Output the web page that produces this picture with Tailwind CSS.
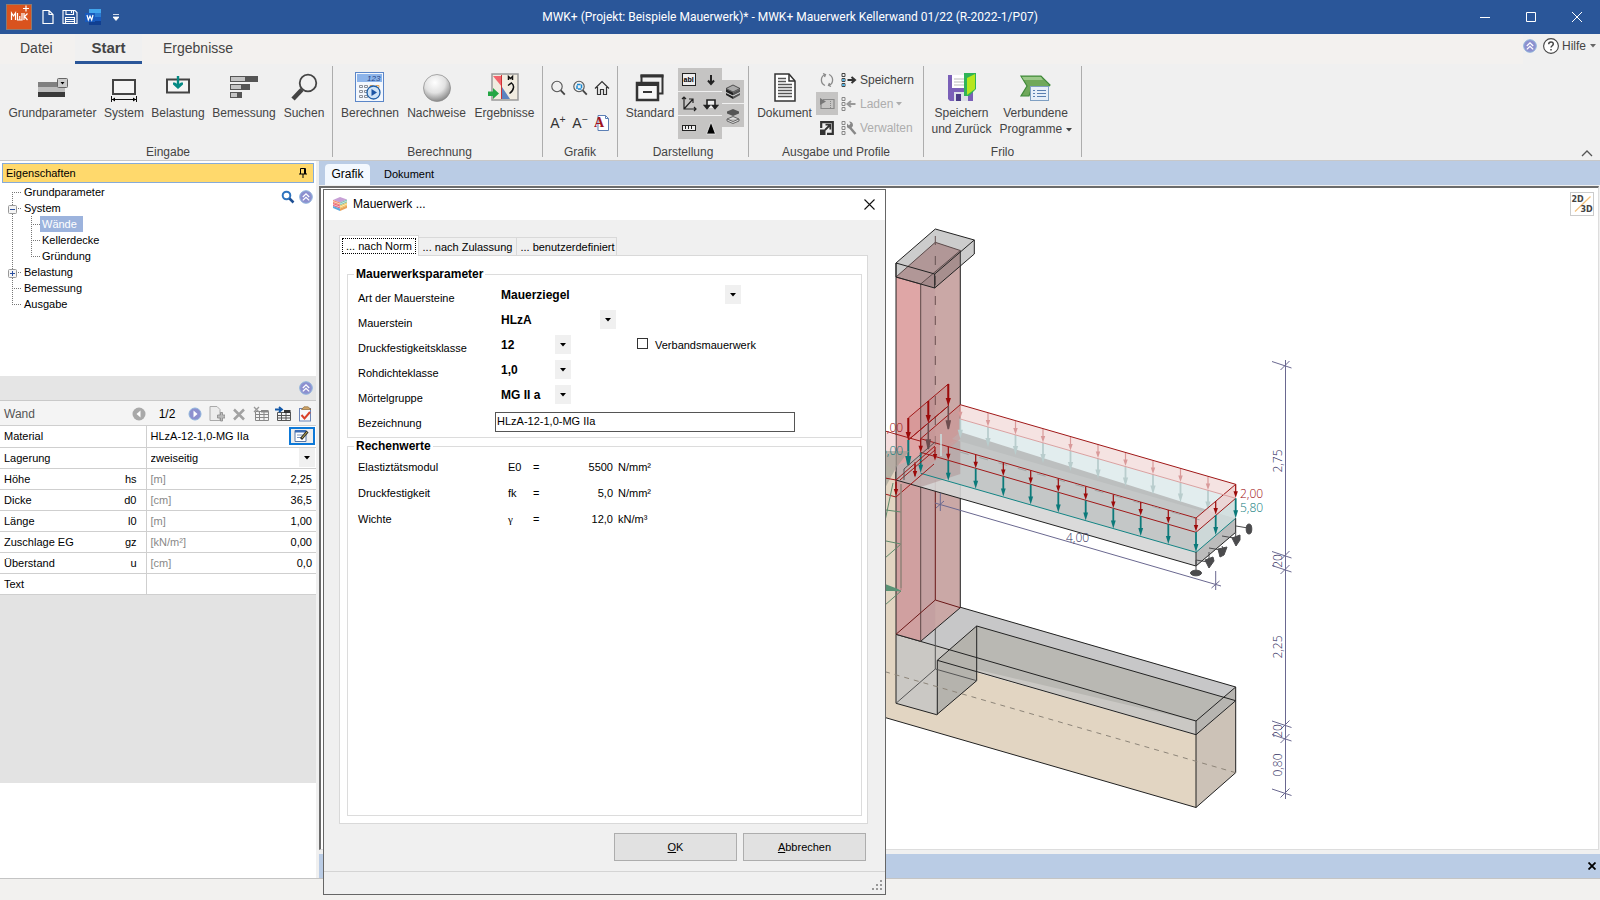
<!DOCTYPE html>
<html lang="de">
<head>
<meta charset="utf-8">
<title>MWK+ Mauerwerk Kellerwand</title>
<script src="https://cdn.jsdelivr.net/npm/@tailwindcss/browser@4"></script>
</head>
<body class="relative flex h-screen flex-col overflow-hidden bg-[#f0f0f0] font-['Liberation_Sans',sans-serif] text-[11px] leading-4 text-black">

<!-- shared symbols -->
<svg class="hidden" aria-hidden="true">
  <defs>
    <symbol id="up" viewBox="0 0 14 14"><circle cx="7" cy="7" r="6.3" fill="#8d90cf" stroke="#8fb4dc" stroke-width="1"/><path d="M3.8 7 7 3.9 10.2 7M3.8 10.4 7 7.3l3.2 3.1" fill="none" stroke="#fff" stroke-width="1.3"/></symbol>
    <symbol id="caret" viewBox="0 0 6 4"><path d="M0 0h6L3 3.5z" fill="currentColor"/></symbol>
    <symbol id="loupe" viewBox="0 0 16 16"><circle cx="7" cy="6.5" r="5.2" fill="none" stroke="#555" stroke-width="1.1"/><path d="m10.8 10.3 4 4.4" stroke="#444" stroke-width="1.8"/></symbol>
    <symbol id="profile" viewBox="0 0 16 16"><path d="M1 1.500h3v3H1zM1 6.500h3v3H1zM1 11.500h3v3H1z" fill="none" stroke="currentColor"/></symbol>
  </defs>
</svg>

<!-- title bar -->
<header class="flex h-[34px] shrink-0 items-center bg-[#2a5699] text-white">
  <div class="flex w-[130px] items-center pl-[6px]">
    <svg class="h-[26px] w-[26px]" viewBox="0 0 26 26"><rect x=".5" y=".5" width="25" height="25" fill="#d9531e" stroke="#8d7a70"/><path d="M5.500 16V9l2 3 2-3v7M11.500 9v7h4.500V9M13.800 12v4M18 9v7M21.500 9.500 18.500 12.500 21.500 16" fill="none" stroke="#fff" stroke-width="1.200"/><path d="M20 1.500v6M17 4.500h6" stroke="#fff" stroke-width="1.200"/></svg>
    <button aria-label="Neu" class="ml-[10px]"><svg class="h-4 w-3" viewBox="0 0 12 16"><path d="M1 1.500h6l4 4v9H1zM7 1.500v4h4" fill="none" stroke="#fff" stroke-width="1.200"/></svg></button>
    <button aria-label="Speichern" class="ml-2"><svg class="h-4 w-4" viewBox="0 0 16 16"><path d="M1 1.500h12l2 2v11H1zM4 1.500v4h7.500v-4M9.500 2v2M3.500 14V8.500h9V14M4 10.500h8M4 12.500h8" fill="none" stroke="#fff" stroke-width="1.100"/></svg></button>
    <button aria-label="Word" class="ml-[7px]"><svg class="h-4 w-4" viewBox="0 0 16 16"><path d="M4 0h12v4H4z" fill="#41a5ee"/><path d="M4 4h12v4H4z" fill="#2b7cd3"/><path d="M4 8h12v4H4z" fill="#185abd"/><path d="M4 12h12v4H4z" fill="#103f91"/><path d="M0 4h10v9H0z" fill="#185abd"/><path d="m2 6 1.300 5L5 7l1.700 4L8 6" fill="none" stroke="#fff" stroke-width="1.200"/></svg></button>
    <button aria-label="Anpassen" class="ml-3"><svg class="h-[7px] w-[6px]" viewBox="0 0 6 7"><path d="M0 .5h6M0 3h6L3 6.500z" fill="#fff" stroke="#fff" stroke-width=".8"/></svg></button>
  </div>
  <h1 class="flex-1 pr-3 text-center font-[Roboto,sans-serif] text-xs">MWK+ (Projekt: Beispiele Mauerwerk)* - MWK+ Mauerwerk Kellerwand 01/22 (R-2022-1/P07)</h1>
  <div class="flex w-[138px]">
    <button aria-label="Minimieren" class="flex w-[46px] justify-center"><svg class="h-[10px] w-[10px]" viewBox="0 0 10 10"><path d="M0 5.500h10" stroke="#fff"/></svg></button>
    <button aria-label="Maximieren" class="flex w-[46px] justify-center"><svg class="h-[10px] w-[10px]" viewBox="0 0 10 10"><path d="M.5.5h9v9h-9z" fill="none" stroke="#fff"/></svg></button>
    <button aria-label="Schließen" class="flex w-[46px] justify-center"><svg class="h-[10px] w-[10px]" viewBox="0 0 10 10"><path d="m0 0 10 10M10 0 0 10" stroke="#fff"/></svg></button>
  </div>
</header>

<!-- ribbon tabs -->
<nav class="flex h-[30px] shrink-0 items-stretch bg-[#f3f1ef] text-sm text-[#444]">
  <button class="w-[75px] pb-[2px] pl-[20px] text-left">Datei</button>
  <button class="w-[67px] border-b-[3px] border-[#2a5699] bg-[#f0f0f0] pt-px text-[15px] font-bold">Start</button>
  <button class="px-[21px] pb-[2px]">Ergebnisse</button>
  <div class="ml-auto flex items-center bg-[#f0f0f0] pb-[7px] text-xs">
    <button aria-label="Einklappen"><svg class="h-[14px] w-[14px]"><use href="#up"/></svg></button>
    <button class="ml-[6px] flex items-center pr-1"><svg class="mr-[3px] h-4 w-4" viewBox="0 0 16 16"><circle cx="8" cy="8" r="7.400" fill="#fff" stroke="#444" stroke-width="1.100"/><path d="M5.700 6.200c0-3 4.600-3 4.600-.2 0 1.800-2.300 1.700-2.300 3.600M8 11v1.500" fill="none" stroke="#444" stroke-width="1.500"/></svg>Hilfe<svg class="ml-1 h-1 w-[6px] text-[#666]"><use href="#caret"/></svg></button>
  </div>
</nav>

<!-- ribbon -->
<div class="flex h-[97px] shrink-0 border-b border-[#c8c8c8] bg-[#f0f0f0] pt-[2px] pb-[3px] text-xs text-[#444] [&_h2]:-mb-[3px] [&_h2]:text-center">
  <section class="flex w-[333px] flex-col border-r border-[#adadad] pl-1" aria-label="Eingabe">
    <div class="flex flex-1 items-start pt-1">
      <button class="flex w-[97px] flex-col items-center gap-px"><svg class="h-[34px] w-[34px]" viewBox="0 0 34 34"><path d="M2 12h27v5H2z" fill="#808080"/><path d="M2 17h27v5H2z" fill="#bdbdbd"/><path d="M2 22h27v5H2z" fill="#3a3a3a"/><rect x="21.500" y="8.500" width="10" height="9" rx="1" fill="#ccc" stroke="#666"/><path d="M24.500 12h4l-2 2.500z"/></svg>Grundparameter</button>
      <button class="flex w-[46px] flex-col items-center gap-px"><svg class="h-[34px] w-[34px]" viewBox="0 0 34 34"><path d="M6 10h22v14H6z" fill="#f5f5f5" stroke="#444" stroke-width="2"/><path d="M4.500 26v6M29.500 26v6M5 29.500h24" stroke="#111" fill="none"/><path d="m5 29.500 3-2v4zM29 29.500l-3-2v4z"/></svg>System</button>
      <button class="flex w-[62px] flex-col items-center gap-px"><svg class="h-[34px] w-[34px]" viewBox="0 0 34 34"><path d="M6 9.500h22v13H6z" fill="#f5f5f5" stroke="#444" stroke-width="2"/><path d="M17 6v9" stroke="#058a84" stroke-width="2.400"/><path d="M12 12.500h2l3 2 3-2h2v2L17 19l-5-4.500z" fill="#058a84"/></svg>Belastung</button>
      <button class="flex w-[70px] flex-col items-center gap-px"><svg class="h-[34px] w-[34px]" viewBox="0 0 34 34"><path d="M3 6h28v6H3zM3 14h20v6H3zM3 22h12v6H3z" fill="#555"/><path d="M4 7h14v4H4zM4 15h10v4H4zM4 23h6v4H4z" fill="#c4c4c4"/></svg>Bemessung</button>
      <button class="flex w-[50px] flex-col items-center gap-px"><svg class="h-[34px] w-[34px]" viewBox="0 0 34 34"><circle cx="21" cy="13" r="8.300" fill="none" stroke="#444" stroke-width="1.800"/><path d="m15 19.500-9 9.500" stroke="#444" stroke-width="4.500"/></svg>Suchen</button>
    </div>
    <h2>Eingabe</h2>
  </section>
  <section class="flex w-[210px] flex-col border-r border-[#adadad] pl-1" aria-label="Berechnung">
    <div class="flex flex-1 items-start pt-1">
      <button class="flex w-[66px] flex-col items-center gap-px"><svg class="h-[34px] w-[34px]" viewBox="0 0 34 34"><rect x="2.500" y="2.500" width="28" height="29" fill="#f3f7fd" stroke="#5b86c8"/><path d="M4 4h25v8H4z" fill="#8db4ea"/><text x="14" y="11" font-size="8" font-style="italic" fill="#1f4485">123</text><g fill="none" stroke="#8a8f99"><path d="M6.500 15.500h3v2h-3zM11.500 15.500h3v2h-3zM6.500 20.500h3v2h-3zM11.500 20.500h3v2h-3zM6.500 25.500h3v2h-3zM11.500 25.500h3v2h-3z"/><path d="M17 15.500h3v2h-3zM23 15.500h3v2h-3z" stroke="#e9a34e"/></g><circle cx="20.500" cy="22.500" r="6.500" fill="#cfe3f7" stroke="#1e5fa8" stroke-width="1.300"/><path d="m18.500 19 5.500 3.500-5.500 3.500z" fill="#1d56a5"/></svg>Berechnen</button>
      <button class="flex w-[67px] flex-col items-center gap-px"><svg class="h-[34px] w-[34px]" viewBox="0 0 34 34"><defs><radialGradient id="ball" cx=".42" cy=".3" r=".7"><stop offset="0" stop-color="#fff"/><stop offset=".55" stop-color="#e2e2e2"/><stop offset="1" stop-color="#8a8a8a"/></radialGradient></defs><circle cx="17" cy="18" r="13.500" fill="url(#ball)" stroke="#888" stroke-width=".7"/></svg>Nachweise</button>
      <button class="flex w-[69px] flex-col items-center gap-px"><svg class="h-[34px] w-[34px]" viewBox="0 0 34 34"><rect x="4" y="4" width="26" height="26" fill="#f1ece0" stroke="#999" stroke-width="1.500"/><path d="M5 6h9v11z" fill="#f2646c"/><path d="M14 17v12h8z" fill="#5b83c0"/><path d="M13.500 5v24" stroke="#c33"/><path d="M20.500 10V6.500l2 2 2-2V10M20 15.500l3.500-2.500c3 2 3 7-2 10.500" fill="none" stroke="#111" stroke-width="1.500"/><path d="M0 21.500h5v-3.500l6 5.500-6 5.500V26H0z" fill="#24a644"/></svg>Ergebnisse</button>
    </div>
    <h2>Berechnung</h2>
  </section>
  <section class="flex w-[75px] flex-col border-r border-[#adadad]" aria-label="Grafik">
    <div class="grid flex-1 grid-cols-3 items-center justify-items-center px-1 pt-[6px] pb-[3px]">
      <button aria-label="Zoom"><svg class="h-4 w-4"><use href="#loupe"/></svg></button>
      <button aria-label="Ausschnitt"><svg class="h-4 w-4" viewBox="0 0 16 16"><use href="#loupe"/><path d="M5 4.500h4.500v4.500H5z" fill="none" stroke="#1a8ad4" stroke-width="1.500" stroke-dasharray="3.500 1"/></svg></button>
      <button aria-label="Gesamt"><svg class="h-4 w-4" viewBox="0 0 16 16"><path d="M1 8.500 8 1.500l7 7M3.500 7v7.500h3v-5h3v5h3V7" fill="none" stroke="#333" stroke-width="1.200"/></svg></button>
      <button class="text-sm text-[#333]" aria-label="Schrift größer">A<sup>+</sup></button>
      <button class="text-sm text-[#333]" aria-label="Schrift kleiner">A<sup>−</sup></button>
      <button aria-label="Schriftart"><svg class="h-4 w-4" viewBox="0 0 16 16"><path d="M4 .5h7.500l3 3v12H4z" fill="#fff" stroke="#5b7fb5"/><path d="M11.500.5v3h3" fill="none" stroke="#5b7fb5"/><text x="0" y="12" font-size="14" font-weight="bold" font-family="Liberation Serif" fill="#a01420">A</text></svg></button>
    </div>
    <h2>Grafik</h2>
  </section>
  <section class="flex w-[131px] flex-col border-r border-[#adadad]" aria-label="Darstellung">
    <div class="flex flex-1 items-start">
      <button class="flex w-[60px] flex-col items-center gap-px pt-1 pl-1"><svg class="h-[34px] w-[34px]" viewBox="0 0 34 34"><path d="M8.500 14V5.500h21v18h-4" fill="none" stroke="#333" stroke-width="2"/><path d="M7.500 6h23" stroke="#333" stroke-width="3"/><rect x="4" y="13" width="21" height="17" fill="#f5f5f5" stroke="#333" stroke-width="2.500"/><path d="M3 14h23" stroke="#333" stroke-width="4"/><path d="M10 22h9" stroke="#333" stroke-width="2"/></svg>Standard</button>
      <div class="mt-[2px] grid w-[44px] grid-cols-2 gap-y-px [&>button]:flex [&>button]:h-[23px] [&>button]:items-center [&>button]:justify-center [&>button]:bg-[#c5c4c3] [&_svg]:h-4 [&_svg]:w-4">
        <button aria-label="Text"><svg viewBox="0 0 16 16"><rect x="1.500" y="1.500" width="13" height="12" fill="#eee" stroke="#222"/><text x="2.500" y="10" font-size="7" font-weight="bold">abl</text></svg></button>
        <button aria-label="Last"><svg viewBox="0 0 16 16"><path d="M8 3v8M5 8.500l3 3.500 3-3.500" fill="none" stroke="#222" stroke-width="2"/></svg></button>
        <button aria-label="Achsen"><svg viewBox="0 0 16 16"><path d="M3 1v12h12M3 13 12 3M1 3l2-2 2 2M13 11l2 2-2 2M8 3h4v4" fill="none" stroke="#222" stroke-width="1.200"/></svg></button>
        <button aria-label="Auflager"><svg viewBox="0 0 16 16"><path d="M4 12V4h8v8M1.500 9.500 4 12.500l2.500-3zM9.500 9.500 12 12.500l2.500-3z" fill="#eee" stroke="#222" stroke-width="1.600"/></svg></button>
        <button aria-label="Maße"><svg viewBox="0 0 16 16"><rect x="1.500" y="5.500" width="13" height="5" fill="#eee" stroke="#222"/><path d="M4.500 6v3M7.500 6v3M10.500 6v3" stroke="#222"/></svg></button>
        <button aria-label="Nord"><svg viewBox="0 0 16 16"><path d="m8 2 4.500 12h-9z" fill="#000" stroke="#eee" stroke-width=".8"/></svg></button>
      </div>
      <div class="mt-[14px] grid w-[22px] gap-y-px [&>button]:flex [&>button]:h-[23px] [&>button]:items-center [&>button]:justify-center [&>button]:bg-[#c5c4c3] [&_svg]:h-4 [&_svg]:w-4">
        <button aria-label="Körper"><svg viewBox="0 0 16 16"><path d="m8 1 7 3.500L8 8 1 4.500z" fill="#aaa" stroke="#333" stroke-width=".8"/><path d="M1 5v6l7 4V8.500z" fill="#222"/><path d="M15 5v6l-7 4V8.500z" fill="#555"/><path d="m1 8.500 7 3.500 7-3.500" fill="none" stroke="#ddd"/></svg></button>
        <button aria-label="Ebenen"><svg viewBox="0 0 16 16"><path d="M2 3.500 8 1l6 2.500v2L8 8 2 5.500z" fill="#555"/><path d="m2 11 6-2.500 6 2.500v2l-6 2.500L2 13zM2 11l6 2.500L14 11" fill="#ddd" stroke="#666"/></svg></button>
      </div>
    </div>
    <h2>Darstellung</h2>
  </section>
  <section class="flex w-[175px] flex-col border-r border-[#adadad]" aria-label="Ausgabe und Profile">
    <div class="flex flex-1 items-start">
      <button class="flex w-[67px] flex-col items-center gap-px pt-1 pl-1"><svg class="h-[34px] w-[34px]" viewBox="0 0 34 34"><path d="M7 4h14l6 7v20H7z" fill="#fff" stroke="#333" stroke-width="1.500"/><path d="M21 4v7h6" fill="none" stroke="#333" stroke-width="1.500"/><path d="M10 8.500h8M10 11.500h8M10 14.500h14M10 17.500h14M10 20.500h14M10 23.500h14M10 26.500h14" stroke="#555" stroke-width="1.300"/></svg>Dokument</button>
      <div class="mt-[2px] grid w-[22px] gap-y-px [&>button]:flex [&>button]:h-[23px] [&>button]:items-center [&>button]:justify-center [&_svg]:h-4 [&_svg]:w-4">
        <button aria-label="Aktualisieren"><svg viewBox="0 0 16 16"><path d="M6 13.500A6 6 0 0 1 6 2.500M10 2.500A6 6 0 0 1 10 13.500M4 1.500l2.500 1L5.500 5M12 14.500l-2.500-1 1-2.500" fill="none" stroke="#8a8a8a" stroke-width="1.300"/></svg></button>
        <button aria-label="Übernehmen" class="bg-[#c5c4c3]"><svg viewBox="0 0 16 16"><path d="M4 3.500h11v9H2M2 7v6" fill="none" stroke="#888" stroke-width="1.200"/><path d="m1 2 6 3.500L1 9z" fill="#777"/><path d="M11.500 5v7" stroke="#888" stroke-dasharray="1 1"/></svg></button>
        <button aria-label="Extern"><svg viewBox="0 0 16 16"><path d="M2.200 8V2.200H13.800V13.800H8" fill="none" stroke="#333" stroke-width="2.200"/><path d="M1 9.500h5.500V15H1z" fill="#333"/><path d="m6 10 5-5M6.500 4.700h4.800v4.800" fill="none" stroke="#333" stroke-width="1.800"/></svg></button>
      </div>
      <div class="mt-[2px] grid gap-y-px pl-[3px] [&>button]:flex [&>button]:h-[23px] [&>button]:items-center [&>button]:gap-[3px] [&>button>svg:first-child]:h-4 [&>button>svg:first-child]:w-4">
        <button><svg viewBox="0 0 16 16" class="text-[#444]"><use href="#profile"/><path d="M1.500 7h2v2h-2zM1.500 12h2v2h-2z" fill="#3db3ee"/><path d="M6.500 8h7M10.500 5l3.500 3-3.500 3" fill="none" stroke="#333" stroke-width="2"/></svg>Speichern</button>
        <button class="text-[#adadad]" disabled><svg viewBox="0 0 16 16" class="text-[#888]"><use href="#profile"/><path d="M14.500 8h-7M10 5 6.500 8l3.500 3" fill="none" stroke="#999" stroke-width="2"/></svg>Laden<svg class="h-1 w-[6px]"><use href="#caret"/></svg></button>
        <button class="text-[#adadad]" disabled><svg viewBox="0 0 16 16" class="text-[#888]"><use href="#profile"/><path d="m8.500 7 6 7" stroke="#888" stroke-width="2.500"/><path d="M6 3.500 8 5.500l1.500-2L8 1.500a4 4 0 0 1 4 4C11 9 7 9 6 7z" fill="#888"/></svg>Verwalten</button>
      </div>
    </div>
    <h2>Ausgabe und Profile</h2>
  </section>
  <section class="flex w-[158px] flex-col border-r border-[#adadad]" aria-label="Frilo">
    <div class="flex flex-1 items-start pt-1">
      <button class="flex w-[75px] flex-col items-center gap-px"><svg class="h-[34px] w-[34px]" viewBox="0 0 34 34"><path d="M3 5h25v26H5l-2-2z" fill="#7a5fb8"/><path d="M7 5h14v13H7z" fill="#fff"/><path d="M9 9h10M9 12h10M9 15h10" stroke="#bbb"/><path d="M9 22h14v9H9z" fill="#dcdfe8"/><path d="M11 24h5v7h-5z" fill="#4a3a86"/><path d="M19 3h12v16l-7 7h-5z" fill="#2fb457"/><path d="M22 8l8-4v15l-8 6z" fill="#b7e61e"/></svg><span>Speichern<br>und Zurück</span></button>
      <button class="flex w-[73px] flex-col items-center gap-px"><svg class="h-[34px] w-[34px]" viewBox="0 0 34 34"><path d="M2 6h20l9 9-5 5H12l-2 6H2l6-10z" fill="#6fa85a" stroke="#3f8a3a" stroke-width="1.200"/><path d="M3 7h19l2 3H5z" fill="#9cc98a"/><rect x="11.500" y="16.500" width="18" height="14" fill="#e6eef8" stroke="#7f9fc2"/><path d="M14 20.500h2M14 23.500h2M14 26.500h2M18 20.500h9M18 23.500h9M18 26.500h9" stroke="#5a7fb0"/></svg><span class="whitespace-nowrap">Verbundene<br>Programme <svg class="inline-block h-1 w-[6px] align-middle"><use href="#caret"/></svg></span></button>
    </div>
    <h2>Frilo</h2>
  </section>
  <button aria-label="Menüband reduzieren" class="mt-auto mr-[7px] ml-auto"><svg class="h-[7px] w-3" viewBox="0 0 12 7"><path d="m1 6 5-5 5 5" fill="none" stroke="#555" stroke-width="1.300"/></svg></button>
</div>

<!-- work area -->
<main class="flex min-h-0 flex-1">
  <aside class="flex w-[316px] shrink-0 flex-col bg-white">
    <div class="mx-[2px] mt-[2px] mb-px flex h-[20px] shrink-0 items-center justify-between border border-[#86abd9] bg-[#ffd96c] pr-[6px] pl-[3px] text-xs"><h2 class="text-[11px]">Eigenschaften</h2><svg class="h-[10px] w-2" viewBox="0 0 8 10"><path d="M1.500 6V.5h5V6M0 6h8M4 6v4M5.500 1v5" fill="none" stroke="#000"/></svg></div>
    <div class="flex h-[192px] shrink-0 justify-between pr-[3px]">
      <div class="flex">
        <svg class="h-[128px] w-[22px]" viewBox="0 0 22 128"><path d="M12.500 8v112M12 8.500h10M12 24.500h10M12 88.500h10M12 104.500h10M12 120.500h10" stroke="#777" stroke-dasharray="1 1"/><rect x="8.500" y="21.500" width="8" height="8" rx="1" fill="#f4f4f4" stroke="#999"/><path d="M10 25.500h5" stroke="#2a4fa0"/><rect x="8.500" y="85.500" width="8" height="8" rx="1" fill="#f4f4f4" stroke="#999"/><path d="M10 89.500h5M12.500 87v5" stroke="#2a4fa0"/></svg>
        <ul class="[&_button]:block [&_button]:h-4 [&_button]:px-[2px]">
          <li><button>Grundparameter</button></li>
          <li><button>System</button>
            <div class="flex"><svg class="ml-[8px] h-12 w-[10px]" viewBox="0 0 10 48"><path d="M1.500 0v40M1 8.500h9M1 24.500h9M1 40.500h9" stroke="#777" stroke-dasharray="1 1"/></svg>
            <ul><li><button class="bg-[#9cb3dd] pr-[6px]! text-white">Wände</button></li><li><button>Kellerdecke</button></li><li><button>Gründung</button></li></ul></div></li>
          <li><button>Belastung</button></li><li><button>Bemessung</button></li><li><button>Ausgabe</button></li>
        </ul>
      </div>
      <div class="flex h-4 gap-1 pt-[6px]"><svg class="h-[14px] w-[14px]" viewBox="0 0 14 14"><circle cx="5.500" cy="5.500" r="3.800" fill="none" stroke="#2f74bf" stroke-width="2"/><path d="m8.500 8.500 4 4" stroke="#1e4f93" stroke-width="2.500"/></svg><svg class="h-[14px] w-[14px]"><use href="#up"/></svg></div>
    </div>
    <div class="flex h-[25px] shrink-0 items-center justify-end border-b border-[#c9c9c9] bg-[#e5e5e5] pr-[3px]"><button aria-label="Zuklappen" class="flex"><svg class="h-[14px] w-[14px]"><use href="#up"/></svg></button></div>
    <div class="flex h-[25px] shrink-0 items-center border-b border-[#cfcfcf] bg-[#f4f4f4] pt-px pr-[3px] pl-1">
      <h2 class="flex-1 text-xs text-[#555]">Wand</h2>
      <svg class="h-[14px] w-[14px]" viewBox="0 0 14 14"><circle cx="7" cy="7" r="6.500" fill="#a9a9a9"/><path d="M8.500 3.500 4.500 7l4 3.500z" fill="#fff"/></svg>
      <span class="w-[42px] text-center text-xs">1/2</span>
      <button aria-label="Weiter"><svg class="h-[14px] w-[14px]" viewBox="0 0 14 14"><circle cx="7" cy="7" r="6" fill="#8d90cf" stroke="#8fb4dc"/><path d="M5.500 3.500 9.500 7l-4 3.500z" fill="#fff"/></svg></button>
      <div class="ml-[7px] flex gap-[6px] [&_svg]:h-4 [&_svg]:w-4">
        <svg viewBox="0 0 16 16"><path d="M1 .5h7l3 3v11H1z" fill="#ececec" stroke="#aaa"/><path d="M8.500 9h3V6.500h2V9H16v3h-2.500v3h-2v-3h-3z" fill="#bbb" stroke="#888" stroke-width=".8"/></svg>
        <svg viewBox="0 0 16 16"><path d="m3 3.500 10 10M13 3.500l-10 10" stroke="#a2a2a2" stroke-width="2.500"/></svg>
        <svg viewBox="0 0 16 16"><path d="M2.500 5.500h13v9h-13zM2 8.500h13M2 11.500h13M6.500 6v9M11 6v9" fill="none" stroke="#888"/><path d="M8 4h7.500v2.500H8z" fill="#888"/><path d="m1 1 5 5M6 1 1 6" stroke="#999" stroke-width="1.300"/></svg>
        <svg viewBox="0 0 16 16"><path d="M2.500 6.500h13v8h-13zM2 9.500h13M2 12h13M6.500 7v8M11 7v8" fill="none" stroke="#555"/><path d="M9 4h6.500v3H9z" fill="#333"/><path d="M0 3.500h6M4 1l3 2.500L4 6" fill="none" stroke="#1459a8" stroke-width="1.800"/></svg>
        <svg viewBox="0 0 16 16"><rect x="2.500" y="2.500" width="11" height="12.500" fill="#f6f8fc" stroke="#6b83b5"/><path d="M4.500 3.500 7 .8h4l3 2.700z" fill="#d0a468" stroke="#8b6a3a" stroke-width=".7"/><path d="m4.500 9 3 3.500L13 6" fill="none" stroke="#d9402a" stroke-width="2"/></svg>
      </div>
    </div>
    <table class="w-full table-fixed border-collapse text-left [&_td]:p-0 [&_td]:px-1 [&_th]:p-0 [&_th]:px-1 [&_th]:font-normal [&_tr]:h-[21px] [&_tr]:border-b [&_tr]:border-[#cfcfcf]">
      <colgroup><col class="w-[106px]"><col class="w-[40px]"><col class="w-[60px]"><col></colgroup>
      <tbody>
        <tr><th colspan="2">Material</th><td colspan="2" class="border-l border-[#cfcfcf] pr-px!"><div class="flex h-[19px] items-center justify-between">HLzA-12-1,0-MG IIa<button aria-label="Material bearbeiten" class="flex h-[18px] w-[26px] items-center justify-center border-2 border-[#0d78d7] bg-[#eee]"><svg class="h-[14px] w-4" viewBox="0 0 16 14"><path d="M1 1.500h11v11H1z" fill="#fff" stroke="#5577a8"/><path d="M1 1h11v2.500H1z" fill="#3d6db5"/><path d="M3 6h6M3 8.500h5" stroke="#7b94bd"/><path d="m7 10 6.500-7.500" stroke="#333" stroke-width="2.800"/><path d="m8 9 5-6" stroke="#c9b34a" stroke-width="1"/></svg></button></div></td></tr>
        <tr><th colspan="2"><label for="lag">Lagerung</label></th><td colspan="2" class="border-l border-[#cfcfcf] pr-px!"><div class="flex"><select id="lag" class="flex-1 appearance-none bg-white"><option>zweiseitig</option></select><span class="flex h-[19px] w-4 items-center justify-center bg-[#f0f0f0]"><svg class="h-1 w-[6px]"><use href="#caret"/></svg></span></div></td></tr>
        <tr><th>Höhe</th><td class="pr-[9px]! text-right">hs</td><td class="border-l border-[#cfcfcf] text-[#888]">[m]</td><td class="text-right">2,25</td></tr>
        <tr><th>Dicke</th><td class="pr-[9px]! text-right">d0</td><td class="border-l border-[#cfcfcf] text-[#888]">[cm]</td><td class="text-right">36,5</td></tr>
        <tr><th>Länge</th><td class="pr-[9px]! text-right">l0</td><td class="border-l border-[#cfcfcf] text-[#888]">[m]</td><td class="text-right">1,00</td></tr>
        <tr><th>Zuschlage EG</th><td class="pr-[9px]! text-right">gz</td><td class="border-l border-[#cfcfcf] text-[#888]">[kN/m²]</td><td class="text-right">0,00</td></tr>
        <tr><th>Überstand</th><td class="pr-[9px]! text-right">u</td><td class="border-l border-[#cfcfcf] text-[#888]">[cm]</td><td class="text-right">0,0</td></tr>
        <tr><th colspan="2">Text</th><td colspan="2" class="border-l border-[#cfcfcf]"></td></tr>
      </tbody>
    </table>
    <div class="mb-[95px] flex-1 bg-[#e3e3e3]"></div>
  </aside>

  <section class="ml-[3px] flex min-w-0 flex-1 flex-col">
    <div class="flex h-[24px] shrink-0 items-end bg-[#bacce5] pl-[6px] [&>button]:h-[21px] [&>button]:pb-px">
      <button class="w-[45px] rounded-t bg-[#f3f8fe] text-xs">Grafik</button>
      <button class="px-[14px]">Dokument</button>
    </div>
    <div class="relative mt-px mr-[1px] min-h-0 flex-1 border-t-2 border-r border-b border-l-2 border-t-[#6b6b6b] border-r-[#ddd] border-b-[#ddd] border-l-[#6b6b6b] bg-white">
      <button class="absolute top-1 right-1 z-10 h-6 w-6 border border-[#ccc] bg-white" aria-label="2D/3D umschalten"><svg class="h-full w-full" viewBox="0 0 22 22"><path d="M4 18.500 19.500 3.500" stroke="#f3c07a" stroke-width="1.200"/><text x="0.500" y="9" font-size="8" font-weight="bold" font-family="DejaVu Sans" fill="#444">2D</text><text x="9.500" y="19" font-size="8" font-weight="bold" font-family="DejaVu Sans" fill="#444">3D</text></svg></button>
      <svg class="block h-full w-full" viewBox="321 188 1277 661" preserveAspectRatio="xMinYMin meet" role="img" aria-label="3D-Modell der Kellerwand">
        <defs>
          <g id="ra"><path d="M0 0v10" stroke="#9c0a0a" stroke-width="1.200"/><path d="M-2.200 7h4.400L0 13.500z" fill="#9c0a0a"/></g>
          <g id="ta"><path d="M0 0v14" stroke="#0b7a7a" stroke-width="1.800"/><path d="M-2.400 12h4.800L0 20z" fill="#0b7a7a"/></g>
          <g id="load"><use href="#ra"/><use href="#ta" y="14"/></g>
          <g id="faint"><path d="M0 0v10" stroke="#d99a9a" stroke-width="1.200"/><path d="M-2.200 7h4.400L0 13.500z" fill="#d99a9a"/><path d="M0 14v14" stroke="#b9cdcd" stroke-width="1.800"/><path d="M-2.600 25h5.200L0 34z" fill="#b9cdcd"/></g>
          <g id="bigload"><path d="M0 0v16" stroke="#9c0a0a" stroke-width="2"/><path d="M-2.600 14h5.200L0 22z" fill="#9c0a0a"/></g>
          <g id="tick"><path d="M-13.500-4 6 2.500M-5 4.500 4-4.500" stroke="#6a6890"/></g>
        </defs>
        <!-- soil -->
        <path d="M885 455h11v180l41 26 259 74v72.500L885 717.500z" fill="#e2d5c2"/>
        <path d="M1196 734.700 1235.700 701v71.700L1196 807.500z" fill="#ccc2b7"/>
        <!-- foundation -->
        <path d="M896 634.300 935.300 600l300.400 87v14L1196 735 976.700 672v8.700l-40 34L896 703.300z" fill="#cac8c4"/>
        <path d="m935.300 600 300.400 87-39.700 34L896 634.300z" fill="#c7c7c8"/>
        <path d="m976.700 626 259 74.700-39.700 20.300-259-60.700z" fill="#b9b8b3"/>
        <path d="m937.300 660.300 39.400-34.300v54.700l-40 34z" fill="#b5b3ad"/>
        <path d="M1196 721 1235.700 687v14L1196 735z" fill="#b7b5b1"/>
        <g fill="none" stroke="#222" stroke-width="1">
          <path d="M885 717.500 1196 807.500 1235.700 772.700V687L935.300 600"/>
          <path d="M896 634.300 1196 721 1235.700 687M1196 721v86.500M896 634.300v69l40.700 11.400 40-34V626L1235.700 700.700 1196 734.700 937.300 660.300v54.400M937.300 660.300 976.700 626" />
          <path d="m896 703.300 39.300-34.300 41.400 11.700M935.300 600v69" stroke="#555"/>
          <path d="m885 671.700 350.700 101" stroke="#8d8579" stroke-dasharray="5 5"/>
        </g>
        <!-- wall -->
        <path d="M896 277 920.700 284v357.300L896 634.300z" fill="#dfa6a6"/>
        <path d="M896 470 920.700 477v164.300L896 634.300z" fill="#d0a0a0"/>
        <path d="m920.700 284 39.600-33.500v357.200l-39.600 33.600z" fill="#caa8a6"/>
        <path d="m920.700 284 14.600-12v357l-14.600 12.300z" fill="#c4a0a1"/>
        <path d="m896 277 39.300-34.700 25 8.200L920.700 284z" fill="#d9b3b3"/>
        <g fill="none" stroke="#333" stroke-width="1">
          <path d="M896 263v371.300l24.700 7 39.600-33.600V250.500" stroke="#222"/>
          <path d="M920.700 284v357.300M896 277l39.300-34.700 25 8.200L920.700 284z" stroke="#5d4545"/>
          <path d="M935.300 236v220" stroke="#6b4f4f" stroke-dasharray="9 11"/>
          <path d="M935.300 480v120M896 634.300 935.300 600l25 7.700" stroke="#6a1717"/>
        </g>
        <path d="m896 263 39.300-34 39 11v14l-39.600 34L896 277z" fill="#555" fill-opacity=".3"/>
        <path d="m896 263 39.300-34 39 11-39.600 34zM896 263v14l38.700 11 39.600-34v-14M934.700 274v14" fill="none" stroke="#222"/>
        <!-- ceiling slab -->
        <path d="M960.300 439 1235.700 518.300v14L1196 566 896 480v-14z" fill="#d6d6d6" fill-opacity=".9"/>
        <path d="m960.300 439 275.400 79.300-39.700 34L920.700 473.300z" fill="#c4c7c7"/>
        <path d="M1196 552.300 1235.700 518.300v14L1196 566z" fill="#bcbcbc"/>
        <path d="m896 466 64.300-27v35L920.700 487 896 480z" fill="#b39797" fill-opacity=".6"/>
        <!-- load planes -->
        <path d="m960.300 404.700 275.400 79.600v14L960.300 419z" fill="#f5e3e2"/>
        <path d="m960.300 419 275.400 79.300v20L960.300 439z" fill="#e2edee"/>
        <path d="m952 439 8.300-7L1211 511l-9 0z" fill="#bcbfbf"/>
        <path d="M1196 518 1235.700 484.300v14L1196 532.300z" fill="#edd0d0" fill-opacity=".8"/>
        <path d="M1196 532.300 1235.700 498.300v20L1196 552.300z" fill="#cfdcdc" fill-opacity=".8"/>
        <path d="m920.700 438.700 39.600-34V439l-39.600 34z" fill="#c98f8f" fill-opacity=".5"/>
        <use href="#faint" x="960.300" y="404.700"/><use href="#faint" x="988" y="413"/><use href="#faint" x="1015.500" y="421"/><use href="#faint" x="1043" y="429"/><use href="#faint" x="1070.500" y="437"/><use href="#faint" x="1098" y="444.500"/><use href="#faint" x="1125.500" y="452.500"/><use href="#faint" x="1153" y="460.500"/><use href="#faint" x="1180.500" y="468.500"/><use href="#faint" x="1208" y="476.500"/>
        <g fill="none" stroke="#a01818">
          <path d="m920.700 438.700 39.600-34 275.400 79.600L1196 518z"/>
          <path d="m920.700 452.300 275.300 80 39.700-34"/>
          <path d="m960.300 419 275.400 79.300" stroke="#dba0a0"/>
        </g>
        <path d="m920.700 473.300 275.300 79 39.700-34" fill="none" stroke="#128484"/>
        <path d="m960 452 240 68" fill="none" stroke="#a3a6a6" stroke-dasharray="9 11"/>
        <path d="m896 480 300 86 39.700-33.700v-14M1196 552v14M896 466v14" fill="none" stroke="#222"/>
        <use href="#load" x="920.700" y="438.700"/><use href="#load" x="948.300" y="446.700"/><use href="#load" x="975.700" y="454.700"/><use href="#load" x="1003.300" y="462.500"/><use href="#load" x="1030.700" y="470.500"/><use href="#load" x="1058.300" y="478.500"/><use href="#load" x="1085.700" y="486.500"/><use href="#load" x="1113.300" y="494.500"/><use href="#load" x="1140.700" y="502"/><use href="#load" x="1168.300" y="510"/><use href="#load" x="1196" y="518"/><use href="#load" x="1215.700" y="501"/><use href="#load" x="1235.700" y="484.300"/>
        <!-- wall head load -->
        <path d="m908.300 418 40-34v22l-40 34zM908.300 440l40-34" fill="#b04040" fill-opacity=".12" stroke="#a01818"/>
        <use href="#bigload" x="908.300" y="418"/><use href="#bigload" x="928.300" y="401"/><use href="#bigload" x="948.300" y="384"/>
        <path d="M908.300 440v18M906.500 457h3.600l-1.800 8z" fill="#0b7a7a" stroke="#0b7a7a" stroke-width="2"/>
        <path d="M928.300 423v20M926.500 440h3.600l-1.800 9zM948.300 406v18M946.500 421h3.600l-1.800 8z" fill="#6d4d4f" stroke="#6d4d4f" stroke-width="1.600"/>
        <path d="M941 434v22" stroke="#c9e2e2" stroke-width="1.500"/>
        <!-- loads left of the wall -->
        <path d="M885 432l11 3v37l-11-8z" fill="#edc7c7" fill-opacity=".6"/>
        <path d="M885 451l24 0-13 17-11 20z" fill="#9d9d92" fill-opacity=".65"/>
        <path d="m885 431 35 10M885 478l11 2 39-34M885 494l11 3 38-33M896 480v14M915 462v14M900 480l35-30" fill="none" stroke="#a01818"/>
        <use href="#ra" x="896" y="482"/><use href="#ra" x="915" y="464"/><use href="#ra" x="935" y="447"/>
        <path d="M904 480v-11l31-27" fill="none" stroke="#555"/>
        <path d="M901 484v104M886 510l15 2M886 541l15 3-16 14M886 590l15 1-16 14M893 483l-8 38" fill="none" stroke="#5f8a6b"/>
        <path d="M885 584l13 5 3 2h-16z" fill="#5a9275"/>
        <path d="M901 484v106" stroke="#a97f7f"/>
        <!-- supports -->
        <g fill="#4b4b4d" stroke="#4b4b4d"><ellipse cx="1249" cy="529" rx="2.800" ry="5"/><path d="M1236 526l12 2M1196 560v12M1222 546l2 5M1235.700 532v8M1209 552v8M1196 560l12 2M1209 548l12 2M1222 536l12 2" fill="none"/><path d="m1232 538 8-3v5l-4 6zM1218 549l9-2-3 8-4 2zM1205 560l8-3 1 4-5 7z"/><ellipse cx="1196" cy="573" rx="5.500" ry="2.800"/></g>
        <!-- dimension lines -->
        <g fill="none" stroke="#6a6890"><path d="m935 503 286 83M940.300 493v18M1215.700 571v19M936 508l8-7M1211.500 588l8-7M1285.500 360v439"/></g>
        <use href="#tick" x="1285.500" y="365.500"/><use href="#tick" x="1285.500" y="555.500"/><use href="#tick" x="1285.500" y="569.500"/><use href="#tick" x="1285.500" y="725"/><use href="#tick" x="1285.500" y="738.500"/><use href="#tick" x="1285.500" y="793"/>
        <g font-family="Open Sans" font-weight="300" font-size="12" fill="#33315f">
          <text x="1066" y="542">4,00</text>
          <g text-anchor="middle"><text transform="translate(1282 461) rotate(-90)">2,75</text><text transform="translate(1282 561) rotate(-90)">20</text><text transform="translate(1282 647) rotate(-90)">2,25</text><text transform="translate(1282 731) rotate(-90)">20</text><text transform="translate(1282 765) rotate(-90)">0,80</text></g>
          <text x="1240" y="498" fill="#9c0a0a">2,00</text><text x="1240" y="512" fill="#0b7a7a">5,80</text>
          <text x="880" y="432" fill="#9c0a0a">2,00</text><text x="880" y="455" fill="#0b7a7a">5,00</text>
        </g>
      </svg>
    </div>
    <div class="mt-1 flex h-[24px] shrink-0 items-center justify-end bg-[#bacce5] pr-1"><button aria-label="Leiste schließen"><svg class="h-2 w-2" viewBox="0 0 8 8"><path d="m.5.5 7 7M7.500.5l-7 7" stroke="#000" stroke-width="1.800"/></svg></button></div>
  </section>
</main>
<footer class="h-[22px] shrink-0 border-t border-[#c4c4c4] bg-[#f2f1ef]"></footer>

<!-- dialog -->
<div role="dialog" aria-label="Mauerwerk ..." class="absolute top-[189px] left-[323px] flex h-[706px] w-[563px] flex-col border border-[#666] bg-[#f0f0f0]">
  <div class="flex h-[30px] shrink-0 items-center bg-white pr-[10px] pb-[2px] pl-[9px] text-xs">
    <svg class="mr-[6px] h-[14px] w-[14px]" viewBox="0 0 14 14"><path d="m0 3 7-3 7 2.500-7 3z" fill="#c7a0d6"/><path d="m0 3 7 2.500v3L0 6z" fill="#f08a6a"/><path d="m0 6 7 2.500v3L0 9z" fill="#e85d75"/><path d="m0 9 7 2.500V14l-7-3z" fill="#5fa8dc"/><path d="m14 2.500-7 3v3l7-3z" fill="#7cc0b0"/><path d="m14 5.500-7 3v3l7-3z" fill="#f3c65a"/><path d="m14 8.500-7 3V14l7-3z" fill="#e9a25a"/><path d="m0 4.500 7 2.500 7-3M0 7.500l7 2.500 7-3" fill="none" stroke="#fff" stroke-width=".6"/></svg>
    <h2 class="flex-1">Mauerwerk ...</h2>
    <button aria-label="Schließen"><svg class="h-[11px] w-[11px]" viewBox="0 0 11 11"><path d="m.5.5 10 10M10.500.5l-10 10" stroke="#111" stroke-width="1.100"/></svg></button>
  </div>
  <div class="flex h-[35px] shrink-0 items-end pl-[15px]" role="tablist">
    <button role="tab" class="z-10 -mb-px flex h-[21px] w-[80px] border border-b-0 border-[#d9d9d9] bg-white p-[2px]"><span class="flex-1 border border-dotted border-black leading-[14px]">... nach Norm</span></button>
    <button role="tab" class="h-[18px] w-[98px] border-t border-r border-[#d9d9d9]">... nach Zulassung</button>
    <button role="tab" class="h-[18px] w-[100px] border-t border-r border-[#d9d9d9] pl-[2px]">... benutzerdefiniert</button>
  </div>
  <div class="mr-[17px] ml-[15px] flex flex-1 flex-col border border-[#d9d9d9] bg-white pt-[10px] pr-[5px] pb-[7px] pl-[7px]">
    <fieldset class="h-[172px] border border-[#dcdcdc] pl-[10px]">
      <legend class="-ml-1 px-[2px] text-xs font-bold">Mauerwerksparameter</legend>
      <div class="grid grid-cols-[137px_1fr] [&>label]:h-[25px] [&>label]:pt-[8px] [&_select]:h-5 [&_select]:appearance-none [&_select]:pl-[6px] [&_select]:text-xs [&_select]:font-bold [&_span]:flex [&_span]:h-[19px] [&_span]:w-4 [&_span]:items-center [&_span]:justify-center [&_span]:bg-[#f0f0f0]">
        <label for="art">Art der Mauersteine</label>
        <div class="flex pt-[3px]"><select id="art" class="w-[230px]"><option>Mauerziegel</option></select><span><svg class="h-1 w-[6px]"><use href="#caret"/></svg></span></div>
        <label for="stein">Mauerstein</label>
        <div class="flex pt-[3px]"><select id="stein" class="w-[105px]"><option>HLzA</option></select><span><svg class="h-1 w-[6px]"><use href="#caret"/></svg></span></div>
        <label for="druck">Druckfestigkeitsklasse</label>
        <div class="flex pt-[3px]"><select id="druck" class="w-[60px]"><option>12</option></select><span><svg class="h-1 w-[6px]"><use href="#caret"/></svg></span>
          <input type="checkbox" id="verband" class="mt-[3px] ml-[66px] h-[11px] w-[11px] appearance-none border border-[#333] bg-white"><label for="verband" class="pt-[2px] pl-[7px]">Verbandsmauerwerk</label></div>
        <label for="roh">Rohdichteklasse</label>
        <div class="flex pt-[3px]"><select id="roh" class="w-[60px]"><option>1,0</option></select><span><svg class="h-1 w-[6px]"><use href="#caret"/></svg></span></div>
        <label for="moertel">Mörtelgruppe</label>
        <div class="flex pt-[3px]"><select id="moertel" class="w-[60px]"><option>MG II a</option></select><span><svg class="h-1 w-[6px]"><use href="#caret"/></svg></span></div>
        <label for="bez">Bezeichnung</label>
        <div class="pt-[5px]"><input id="bez" value="HLzA-12-1,0-MG IIa" class="h-5 w-[300px] border border-[#555] px-px pb-[2px]"></div>
      </div>
    </fieldset>
    <fieldset class="flex-1 border border-[#dcdcdc] pl-[10px]">
      <legend class="-ml-1 px-[2px] text-xs font-bold">Rechenwerte</legend>
      <table class="[&_td]:p-0 [&_th]:p-0 [&_th]:text-left [&_th]:font-normal [&_tr]:h-[26px]">
        <tr><th class="w-[150px]">Elastiztätsmodul</th><td class="w-[25px]">E0</td><td class="w-[30px]">=</td><td class="w-[50px] text-right">5500</td><td class="pl-[5px]!">N/mm²</td></tr>
        <tr><th>Druckfestigkeit</th><td>fk</td><td>=</td><td class="text-right">5,0</td><td class="pl-[5px]!">N/mm²</td></tr>
        <tr><th>Wichte</th><td class="font-['Liberation_Serif',serif]">γ</td><td>=</td><td class="text-right">12,0</td><td class="pl-[5px]!">kN/m³</td></tr>
      </table>
    </fieldset>
  </div>
  <div class="flex h-[48px] shrink-0 justify-end gap-[6px] border-b border-[#d4d4d4] pt-[9px] pr-[19px] [&>button]:h-[28px] [&>button]:w-[123px] [&>button]:border [&>button]:border-[#adadad] [&>button]:bg-[#e1e1e1]">
    <button><u>O</u>K</button><button><u>A</u>bbrechen</button>
  </div>
  <div class="flex h-[22px] shrink-0 items-end justify-end p-[3px]"><svg class="h-[11px] w-[11px]" viewBox="0 0 11 11"><path d="M9 1h2M5 5h2M9 5h2M1 9h2M5 9h2M9 9h2" stroke="#999" stroke-width="2"/></svg></div>
</div>
</body>
</html>
